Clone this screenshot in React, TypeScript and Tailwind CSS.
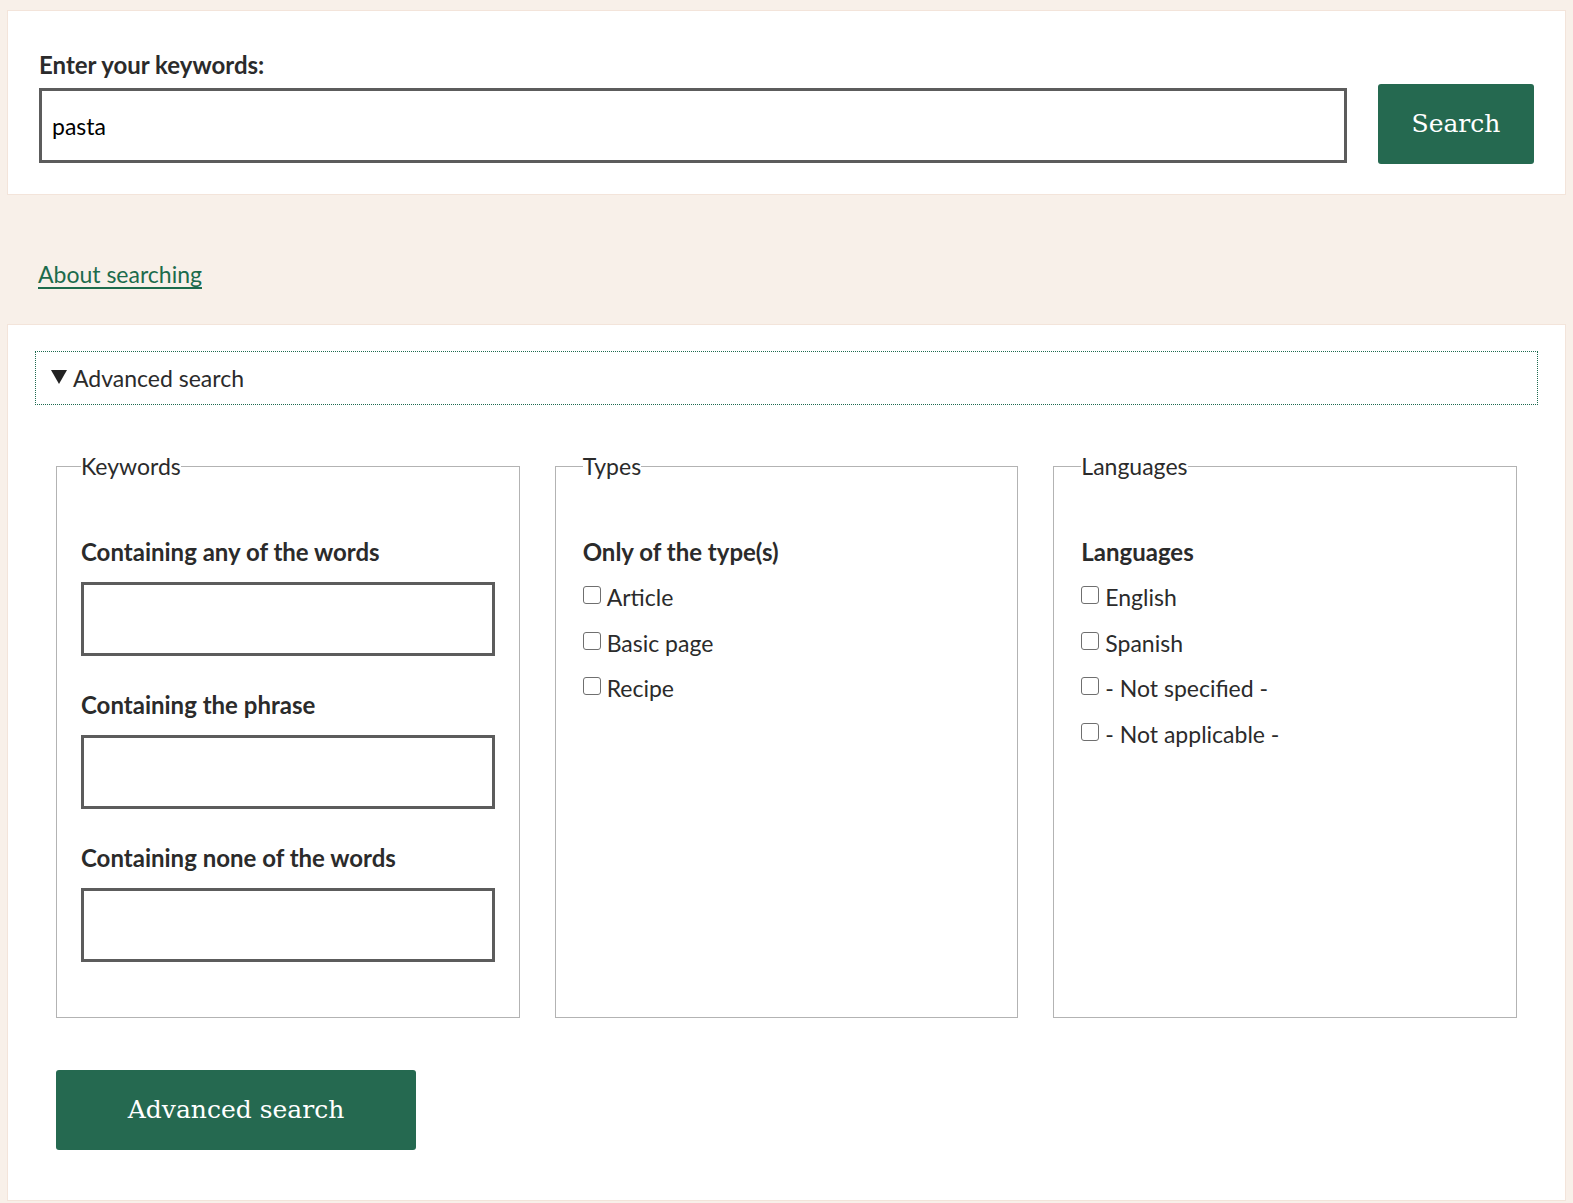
import React from "react";

const sans = "font-['Lato','Noto_Sans',sans-serif]";
const serif = "font-['DejaVu_Serif','Liberation_Serif',serif]";

function Check({ label }: { label: string }) {
  return (
    <label className="flex items-center gap-[6px] text-[23px] leading-[30px] text-[#2b2b2b]">
      <input
        type="checkbox"
        className="appearance-none w-[18px] h-[18px] border border-[#6f6f6f] rounded-[3px] bg-white shrink-0 -mt-[4px]"
      />
      {label}
    </label>
  );
}

function TextField({ label }: { label: string }) {
  return (
    <div className="mb-[34px]">
      <label className="block text-[24px] font-bold leading-[30px] text-[#2b2b2b] mb-[15px]">{label}</label>
      <input type="text" className="block w-full h-[74px] border-[3px] border-[#5c5c5c] bg-white" />
    </div>
  );
}

export default function App() {
  return (
    <div className={`min-h-[1203px] bg-[#f8f0e9] px-[7px] pt-[10px] pb-[6px] ${sans}`}>
      {/* Basic search */}
      <div className="bg-white border border-[#f3e4da] px-[31px] pt-[39px] pb-[31px]">
        <label className="block text-[24px] font-bold leading-[30px] text-[#2b2b2b] mb-[8px]">
          Enter your keywords:
        </label>
        <div className="flex items-end gap-[31px] -mt-[4px]">
          <input
            type="text"
            defaultValue="pasta"
            className="flex-1 h-[75px] border-[3px] border-[#5c5c5c] px-[10px] text-[23px] text-black bg-white"
          />
          <button className={`w-[156px] h-[80px] -mb-[1px] rounded-[3px] bg-[#256950] text-white text-[25px] ${serif}`}>
            Search
          </button>
        </div>
      </div>

      <div className="px-[31px] pt-[62px] pb-[33px]">
        <a href="#" className="text-[23px] leading-[34px] text-[#1c6b4c] underline underline-offset-[4px] decoration-[2px]">
          About searching
        </a>
      </div>

      {/* Advanced search */}
      <div className="bg-white border border-[#f3e4da] px-[27px] pt-[26px] pb-[50px]">
        <div className="flex items-center h-[54px] border border-dotted border-[#1d6a4f] px-[15px] text-[23px] text-[#2b2b2b]">
          <svg width="16" height="14" viewBox="0 0 16 14" className="mr-[6px] -mt-[2px]">
            <path d="M0 0 L16 0 L8 14 Z" fill="#222" />
          </svg>
          Advanced search
        </div>

        <div className="px-[21px] pt-[46px]">
          <div className="grid grid-cols-3 gap-[35px]">
            <fieldset className="border border-[#b3b3b3] px-[24px] pt-[56px] pb-[21px]">
              <legend className="text-[23px] leading-[30px] text-[#2b2b2b]">Keywords</legend>
              <TextField label="Containing any of the words" />
              <TextField label="Containing the phrase" />
              <TextField label="Containing none of the words" />
            </fieldset>

            <fieldset className="border border-[#b3b3b3] px-[27px] pt-[56px]">
              <legend className="text-[23px] leading-[30px] text-[#2b2b2b]">Types</legend>
              <div className="text-[24px] font-bold leading-[30px] text-[#2b2b2b] mb-[15px]">Only of the type(s)</div>
              <div className="flex flex-col gap-[15.5px]">
                <Check label="Article" />
                <Check label="Basic page" />
                <Check label="Recipe" />
              </div>
            </fieldset>

            <fieldset className="border border-[#b3b3b3] px-[27px] pt-[56px]">
              <legend className="text-[23px] leading-[30px] text-[#2b2b2b]">Languages</legend>
              <div className="text-[24px] font-bold leading-[30px] text-[#2b2b2b] mb-[15px]">Languages</div>
              <div className="flex flex-col gap-[15.5px]">
                <Check label="English" />
                <Check label="Spanish" />
                <Check label="- Not specified -" />
                <Check label="- Not applicable -" />
              </div>
            </fieldset>
          </div>

          <button className={`mt-[52px] w-[360px] h-[80px] rounded-[3px] bg-[#256950] text-white text-[25px] ${serif}`}>
            Advanced search
          </button>
        </div>
      </div>
    </div>
  );
}
